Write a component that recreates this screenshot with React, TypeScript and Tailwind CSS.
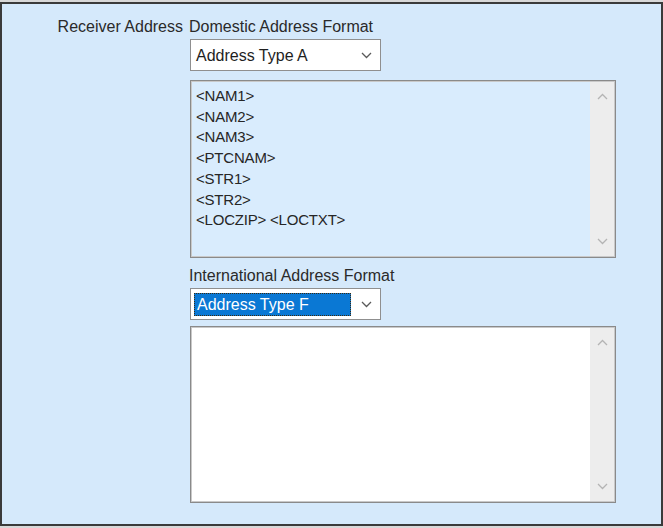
import React from "react";

const FONT = "font-['Liberation_Sans',Arial,sans-serif]";

function Chevron({ up = false, className = "" }: { up?: boolean; className?: string }) {
  return (
    <svg width="11" height="7" viewBox="0 0 11 7" className={className} fill="none">
      <polyline
        points={up ? "1,6 5.5,1.5 10,6" : "1,1 5.5,5.5 10,1"}
        stroke="currentColor"
        strokeWidth="1.3"
        strokeLinejoin="miter"
      />
    </svg>
  );
}

function Select({ value, selected = false }: { value: string; selected?: boolean }) {
  return (
    <div className="flex h-[32px] w-[191px] items-center border border-[#8f8f8f] bg-white">
      {selected ? (
        <div className="ml-[3px] flex h-[23px] w-[157px] items-center border border-dotted border-[#3a2a10] bg-[#0a78d4] pl-[2px] text-[16px] leading-[19px] text-white">
          {value}
        </div>
      ) : (
        <div className="w-[162px] pl-[5px] text-[16px] leading-[19px] text-[#1e1e1e]">{value}</div>
      )}
      <Chevron className="ml-auto mr-[8px] text-[#5a5a5a]" />
    </div>
  );
}

function ScrollTrack() {
  return (
    <div className="my-[1px] mr-[1px] flex w-[24px] flex-col items-center justify-between bg-[#ededed] py-[11px] text-[#b4b4b4]">
      <Chevron up />
      <Chevron />
    </div>
  );
}

function TextBox({ lines, tone }: { lines: string[]; tone: string }) {
  return (
    <div className={`flex w-[426px] border border-[#8a8a8a] shadow-[inset_0_0_0_1px_#c9c9c9] ${tone}`}>
      <div className="flex-1 pl-[5px] pt-[5px] text-[15px] leading-[20.7px] tracking-[-0.2px] text-[#262626]">
        {lines.map((l) => (
          <div key={l}>{l}</div>
        ))}
      </div>
      <ScrollTrack />
    </div>
  );
}

export default function App() {
  const domestic = ["<NAM1>", "<NAM2>", "<NAM3>", "<PTCNAM>", "<STR1>", "<STR2>", "<LOCZIP> <LOCTXT>"];
  return (
    <div className={`h-[528px] w-[663px] bg-[#d8d8d8] pb-[2px] pt-[2px] ${FONT}`}>
      <div className="flex h-full border-2 border-[#3a3a3a] bg-[#d5e9fb] pt-[13px]">
        <div className="w-[188px] pr-[7px] text-right text-[16px] leading-[19px] text-[#2a2a2a]">
          Receiver Address
        </div>
        <div className="flex flex-col">
          <div className="-ml-[1px] text-[16px] leading-[19px] text-[#2a2a2a]">Domestic Address Format</div>
          <div className="mt-[3px]">
            <Select value="Address Type A" />
          </div>
          <div className="mt-[9px] flex h-[178px]">
            <TextBox lines={domestic} tone="bg-[#d9ecfd]" />
          </div>
          <div className="-ml-[1px] mt-[8px] text-[16px] leading-[19px] text-[#2a2a2a]">
            International Address Format
          </div>
          <div className="mt-[3px]">
            <Select value="Address Type F" selected />
          </div>
          <div className="mt-[6px] flex h-[177px]">
            <TextBox lines={[]} tone="bg-white" />
          </div>
        </div>
      </div>
    </div>
  );
}
